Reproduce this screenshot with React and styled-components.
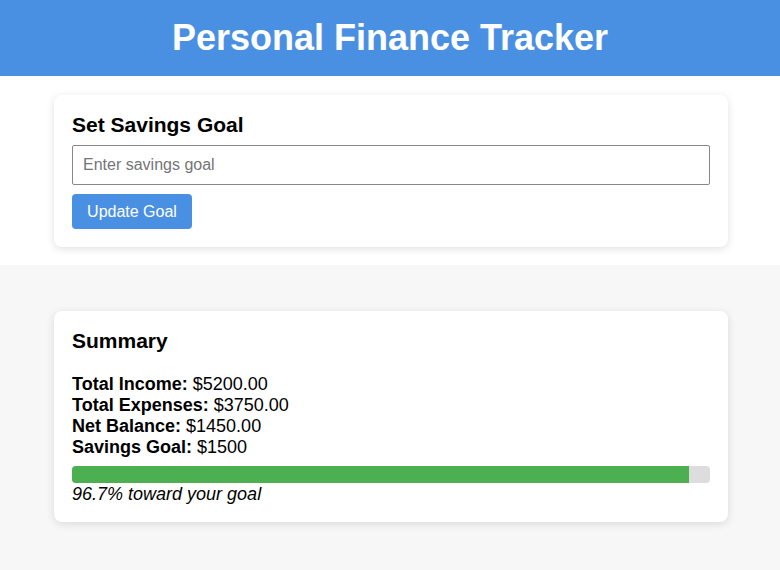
import styled, { createGlobalStyle } from "styled-components"

const GlobalStyle = createGlobalStyle`
    body {
        margin: 0;
        font-family: "Liberation Sans", Arial, sans-serif;
        background: #f7f7f7;
        color: #000;
    }
`

const Header = styled.header`
    background: #4a90e2;
    height: 76px;
    display: flex;
    align-items: center;
    justify-content: center;
`

const Title = styled.h1`
    margin: 0;
    color: #fff;
    font-size: 36px;
    font-weight: bold;
`

const Section = styled.section`
    background: ${props => props.$white ? "#fff" : "#f7f7f7"};
    padding: ${props => props.$white ? "19px 52px 18px 54px" : "46px 52px 48px 54px"};
`

const Card = styled.div`
    background: #fff;
    border-radius: 8px;
    box-shadow: 0 2px 8px rgba(0, 0, 0, 0.12);
    padding: 18px;
`

const CardTitle = styled.h2`
    margin: 0 0 ${props => props.$gap || 9}px;
    font-size: 21px;
    font-weight: bold;
    line-height: 23px;
`

const GoalInput = styled.input`
    display: block;
    width: 100%;
    box-sizing: border-box;
    height: 40px;
    padding: 0 10px;
    border: 1px solid #888;
    border-radius: 2px;
    font-family: "Liberation Sans", Arial, sans-serif;
    font-size: 16px;
    margin-bottom: 9px;
    &::placeholder {
        color: #757575;
    }
`

const Button = styled.button`
    background: #4a90e2;
    color: #fff;
    border: none;
    border-radius: 4px;
    height: 35px;
    width: 120px;
    font-family: "Liberation Sans", Arial, sans-serif;
    font-size: 16px;
    cursor: pointer;
`

const Line = styled.div`
    font-size: 18px;
    line-height: 21px;
    b {
        font-weight: bold;
    }
`

const Track = styled.div`
    margin-top: 8px;
    height: 17px;
    background: #ddd;
    border-radius: 4px;
    overflow: hidden;
`

const Fill = styled.div`
    height: 100%;
    background: #4caf50;
`

const Note = styled.div`
    font-size: 18px;
    font-style: italic;
    line-height: 20px;
    margin-top: 1px;
`

const rows = [
    ["Total Income:", "$5200.00"],
    ["Total Expenses:", "$3750.00"],
    ["Net Balance:", "$1450.00"],
    ["Savings Goal:", "$1500"],
]

export default function App() {
    const pct = (1450 / 1500) * 100
    return (
        <>
            <GlobalStyle />
            <Header>
                <Title>Personal Finance Tracker</Title>
            </Header>
            <Section $white>
                <Card>
                    <CardTitle>Set Savings Goal</CardTitle>
                    <GoalInput placeholder="Enter savings goal" />
                    <Button>Update Goal</Button>
                </Card>
            </Section>
            <Section>
                <Card>
                    <CardTitle $gap={22}>Summary</CardTitle>
                    {rows.map(([label, value]) => (
                        <Line key={label}><b>{label}</b> {value}</Line>
                    ))}
                    <Track>
                        <Fill style={{ width: pct + "%" }} />
                    </Track>
                    <Note>{pct.toFixed(1)}% toward your goal</Note>
                </Card>
            </Section>
        </>
    )
}
